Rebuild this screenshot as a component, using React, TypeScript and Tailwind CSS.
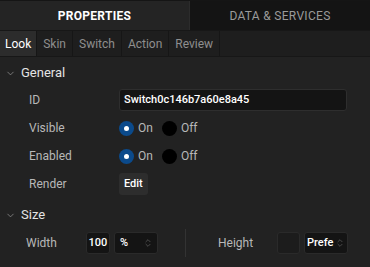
import { ChevronDown, ChevronsUpDown } from "lucide-react";

const font = { fontFamily: "Roboto, 'Liberation Sans', sans-serif" };

function Radio({ on, label }: { on: boolean; label: string }) {
  return (
    <div className="flex items-center gap-[4px]">
      {on ? (
        <span className="w-[15px] h-[15px] rounded-full bg-[#0b4a8b] flex items-center justify-center">
          <span className="w-[5px] h-[5px] rounded-full bg-white" />
        </span>
      ) : (
        <span className="w-[15px] h-[15px] rounded-full bg-black" />
      )}
      <span className="text-[12px] text-[#b8b8b8]">{label}</span>
    </div>
  );
}

function Row({ label, children }: { label: string; children: React.ReactNode }) {
  return (
    <div className="flex items-center h-[28px]">
      <span className="w-[119px] pl-[29px] text-[12px] text-[#b8b8b8]">{label}</span>
      {children}
    </div>
  );
}

function Section({ title }: { title: string }) {
  return (
    <div className="flex items-center h-[26px] pl-[5px] gap-[5px]">
      <ChevronDown size={11} className="text-[#9a9a9a]" strokeWidth={1.5} />
      <span className="text-[13px] text-[#e4e4e4]">{title}</span>
    </div>
  );
}

export default function App() {
  const tabs = ["Look", "Skin", "Switch", "Action", "Review"];
  return (
    <div className="w-[370px] h-[267px] bg-[#222222] overflow-hidden" style={font}>
      <div className="flex h-[31px] border-t border-[#151515] border-b border-b-[#171717]">
        <div className="w-[189px] bg-[#242424] flex items-center justify-center text-[12px] font-bold text-white tracking-[0.3px]">
          PROPERTIES
        </div>
        <div className="flex-1 bg-[#141414] border-l border-[#2c2c2c] flex items-center justify-center text-[12px] text-[#9a9a9a] tracking-[0.3px]">
          DATA &amp; SERVICES
        </div>
      </div>
      <div className="flex h-[26px] bg-[#1e1e1e] border-b border-[#171717]">
        {tabs.map((t, i) => (
          <div
            key={t}
            className={
              i === 0
                ? "px-[5px] flex items-center bg-[#2c2c2c] text-white text-[12px] border-r border-[#161616]"
                : "px-[6px] flex items-center text-[#8e8e8e] text-[12px] border-r border-[#161616]"
            }
          >
            {t}
          </div>
        ))}
      </div>
      <div className="pt-[3px]">
        <Section title="General" />
        <Row label="ID">
          <div className="w-[228px] h-[22px] rounded-[3px] bg-[#141414] border border-[#2e2e2e] flex items-center pl-[4px] text-[11px] text-white font-medium">
            Switch0c146b7a60e8a45
          </div>
        </Row>
        <Row label="Visible">
          <div className="flex items-center gap-[9px]">
            <Radio on label="On" />
            <Radio on={false} label="Off" />
          </div>
        </Row>
        <Row label="Enabled">
          <div className="flex items-center gap-[9px]">
            <Radio on label="On" />
            <Radio on={false} label="Off" />
          </div>
        </Row>
        <Row label="Render">
          <div className="h-[22px] px-[5px] rounded-[3px] bg-[#2d2d2d] flex items-center text-[11px] text-white font-medium">
            Edit
          </div>
        </Row>
        <div className="h-[4px]" />
        <Section title="Size" />
        <div className="flex items-center h-[30px]">
          <span className="w-[86px] pl-[26px] text-[12px] text-[#b8b8b8]">Width</span>
          <div className="w-[24px] h-[22px] rounded-[3px] bg-[#141414] border border-[#2a2a2a] flex items-center justify-center text-[11px] text-white font-medium">
            100
          </div>
          <div className="ml-[4px] w-[44px] h-[22px] rounded-[3px] bg-[#141414] border border-[#2a2a2a] flex items-center justify-between pl-[5px] pr-[4px] text-[11px] text-white font-medium">
            %
            <ChevronsUpDown size={10} className="text-[#6a6a6a]" strokeWidth={1.5} />
          </div>
          <div className="ml-[27px] w-px h-[28px] bg-[#333333]" />
          <span className="ml-[32px] w-[59px] text-[12px] text-[#b8b8b8]">Height</span>
          <div className="w-[23px] h-[22px] rounded-[3px] bg-[#1c1c1c] border border-[#2a2a2a]" />
          <div className="ml-[4px] w-[44px] h-[22px] rounded-[3px] bg-[#141414] border border-[#2a2a2a] flex items-center justify-between pl-[2px] pr-[2px] text-[11px] text-white font-medium overflow-hidden">
            Prefe
            <ChevronsUpDown size={10} className="text-[#6a6a6a] shrink-0" strokeWidth={1.5} />
          </div>
        </div>
      </div>
    </div>
  );
}
